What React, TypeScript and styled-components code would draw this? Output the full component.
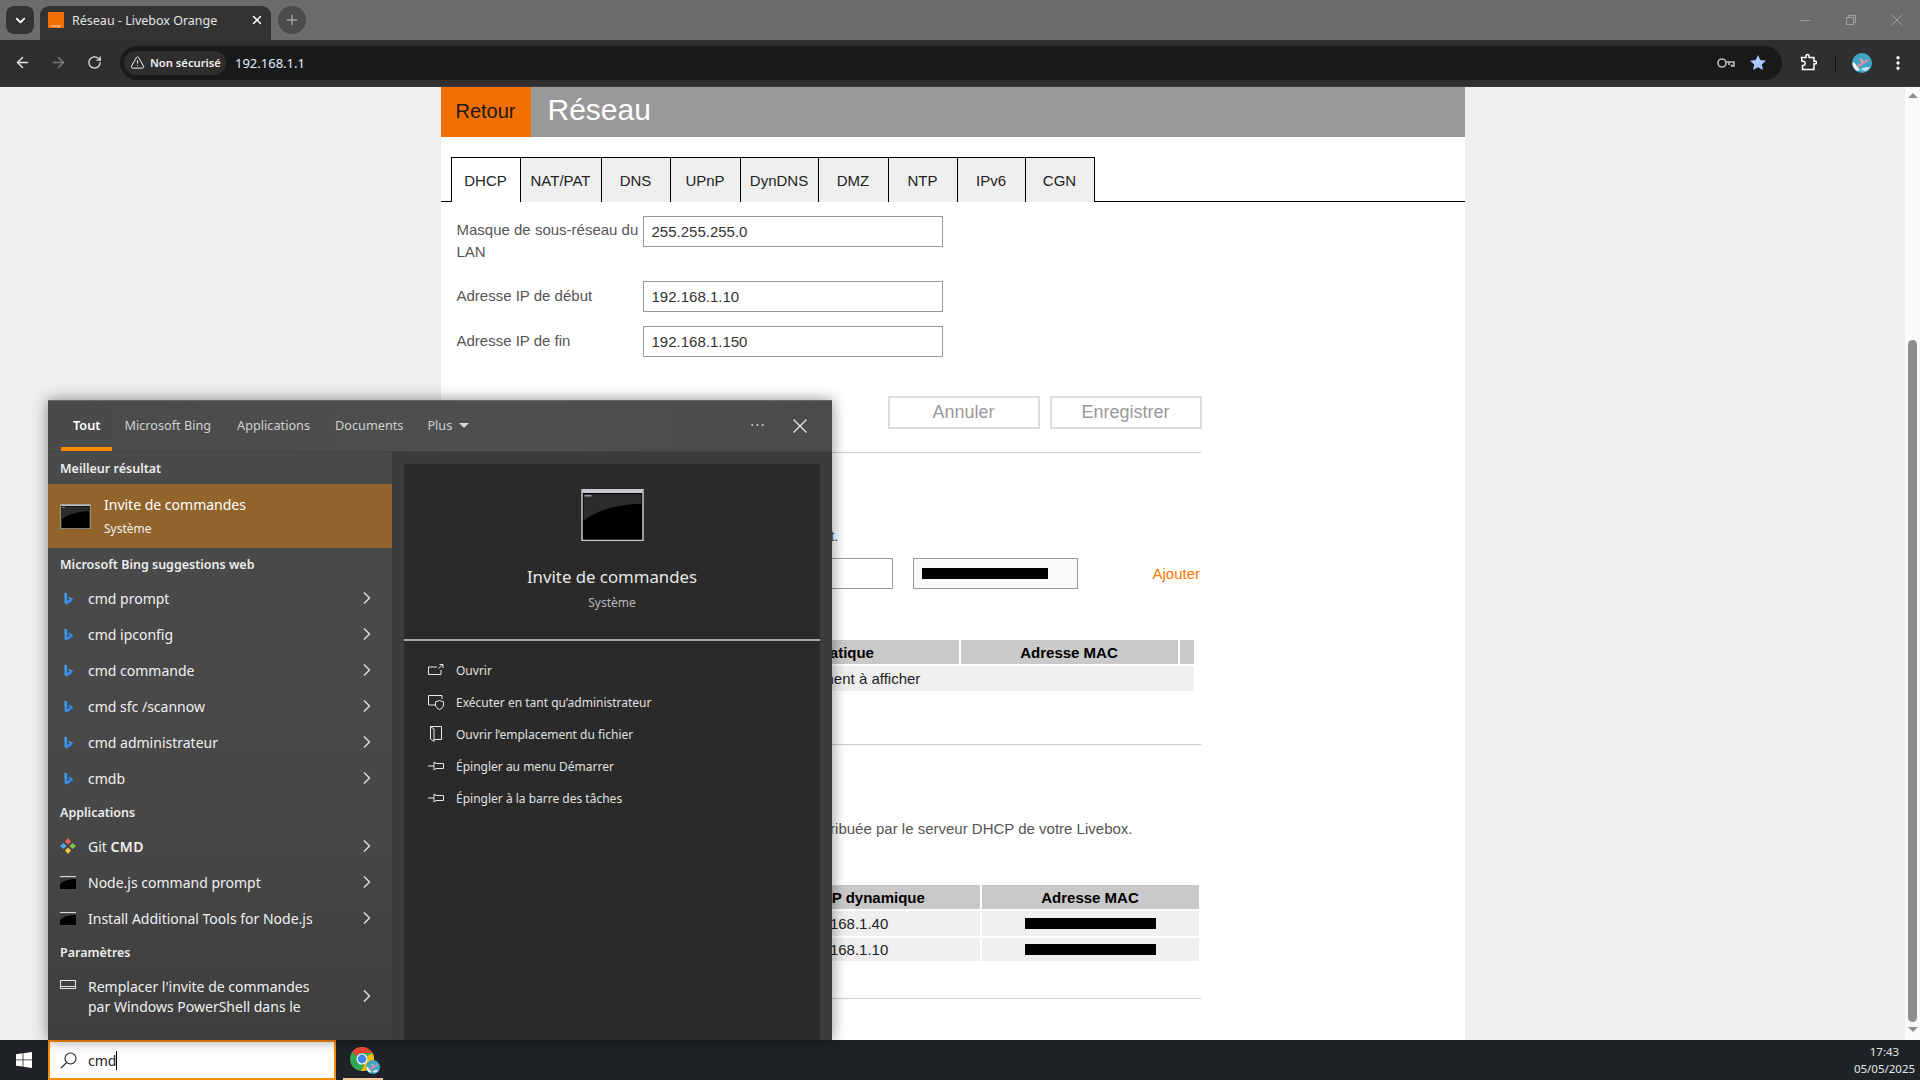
import styled, { createGlobalStyle } from 'styled-components'
import { ArrowLeft, ArrowRight, ChevronDown, ChevronRight, EllipsisVertical, Plus, RotateCw, TriangleAlert, X } from 'lucide-react'

const GlobalStyle = createGlobalStyle`
  html, body {
    margin: 0;
    padding: 0;
    width: 1920px;
    height: 1080px;
    overflow: hidden;
    font-family: "Liberation Sans", Arial, sans-serif;
  }
  * {
    box-sizing: border-box;
  }
`

const uiFont = `"Noto Sans", "Open Sans", sans-serif`

const Screen = styled.div`
  width: 1920px;
  height: 1080px;
  display: flex;
  flex-direction: column;
  overflow: hidden;
`

/* ---------- browser chrome ---------- */

const TabStrip = styled.div`
  height: 40px;
  flex: none;
  background: #6c6c6c;
  display: flex;
  align-items: flex-start;
  padding: 6px 0 0 6px;
  font-family: ${uiFont};
`

const TabListButton = styled.div`
  width: 28px;
  height: 28px;
  border-radius: 8px;
  background: #333333;
  color: #fff;
  display: flex;
  align-items: center;
  justify-content: center;
  margin-right: 6px;
`

const Tab = styled.div`
  width: 231px;
  height: 34px;
  background: #333333;
  border-radius: 9px 9px 0 0;
  display: flex;
  align-items: center;
  padding: 0 7px 6px 8px;
  color: #e4e4e4;
  font-size: 12.5px;
`

const Favicon = styled.div`
  width: 16px;
  height: 16px;
  flex: none;
  background: #f16e00;
  color: #fff;
  font-size: 3px;
  line-height: 4px;
  display: flex;
  align-items: flex-end;
  justify-content: center;
  margin-right: 8px;
`

const TabTitle = styled.span`
  flex: 1;
  white-space: nowrap;
`

const NewTab = styled.div`
  width: 28px;
  height: 28px;
  margin-left: 7px;
  border-radius: 50%;
  background: #4b4b4b;
  color: #a8a8a8;
  display: flex;
  align-items: center;
  justify-content: center;
`

const WindowControls = styled.div`
  margin-left: auto;
  display: flex;
  gap: 36px;
  padding: 9px 18px 0 0;
  color: #a0a0a0;
`

const Toolbar = styled.div`
  height: 47px;
  flex: none;
  background: #2f2f2f;
  border-bottom: 1px solid #3c3c3c;
  display: flex;
  align-items: center;
  padding: 0 0 1px 13px;
  font-family: ${uiFont};
`

const NavButton = styled.div<{ $dim?: boolean }>`
  width: 18px;
  height: 18px;
  margin-right: 18px;
  color: ${(p) => (p.$dim ? '#7c7c7c' : '#e6e6e6')};
  display: flex;
  align-items: center;
  justify-content: center;
`

const AddressBar = styled.div`
  width: 1662px;
  height: 34px;
  margin-left: -1px;
  border-radius: 17px;
  background: #1a1a1a;
  display: flex;
  align-items: center;
  padding: 0 16px 0 4px;
`

const SecurityChip = styled.div`
  width: 102px;
  height: 24px;
  border-radius: 12px;
  background: #2e2e2e;
  color: #f0f0f0;
  font-size: 11.2px;
  font-weight: 600;
  display: flex;
  align-items: center;
  gap: 5px;
  padding-left: 6px;
  white-space: nowrap;
`

const Url = styled.span`
  margin-left: 9px;
  font-size: 13px;
  color: #e6efff;
`

const AddressIcons = styled.div`
  margin-left: auto;
  display: flex;
  align-items: center;
  gap: 15px;
`

const ToolbarIcons = styled.div`
  display: flex;
  align-items: center;
  margin-left: 18px;
  color: #fff;
`

const ToolbarSeparator = styled.div`
  width: 1px;
  height: 16px;
  background: #111;
  margin: 0 16px 0 18px;
`

/* ---------- page under the search panel ---------- */

const Viewport = styled.div`
  position: relative;
  flex: 1;
  min-height: 0;
  display: flex;
`

const PageArea = styled.div`
  flex: 1;
  background: #efefef;
  overflow: hidden;
  display: flex;
  justify-content: center;
`

const Content = styled.main`
  width: 1024px;
  background: #fff;
`

const Header = styled.div`
  height: 50px;
  background: #999999;
  display: flex;
  align-items: center;
`

const BackLink = styled.div`
  width: 90px;
  height: 100%;
  padding-bottom: 2px;
  background: #f16e00;
  color: #1a1a1a;
  font-size: 20px;
  display: flex;
  align-items: center;
  justify-content: center;
`

const PageTitle = styled.h1`
  margin: 0 0 5px 17px;
  font-size: 30px;
  font-weight: 400;
  color: #fff;
`

const TabBar = styled.div`
  display: flex;
  margin-top: 20px;
  padding-left: 10px;
  border-bottom: 1px solid #000;
  height: 45px;
`

const PageTab = styled.div<{ $active?: boolean; $width: number }>`
  width: ${(p) => p.$width}px;
  height: 45px;
  background: ${(p) => (p.$active ? '#fff' : '#efefef')};
  border: 1px solid #000;
  border-left-width: ${(p) => (p.$active ? 1 : 0)}px;
  border-bottom: 0;
  font-size: 15px;
  color: #222;
  display: flex;
  align-items: center;
  justify-content: center;
`

const Body = styled.div`
  width: 760px;
  padding: 14px 0 0 16px;
`

const FormRow = styled.div`
  display: flex;
  align-items: flex-start;
  margin-bottom: 14px;
`

const FormLabel = styled.label<{ $top: number }>`
  width: 186px;
  padding: ${(p) => p.$top}px 0 4px;
  font-size: 15px;
  line-height: 22px;
  color: #555;
`

const TextInput = styled.div`
  width: 300px;
  height: 31px;
  border: 1px solid #999;
  padding: 0 8px;
  font-size: 15px;
  color: #333;
  display: flex;
  align-items: center;
`

const Actions = styled.div`
  display: flex;
  justify-content: flex-end;
  gap: 10px;
  margin: 39px -1px 0 0;
`

const ActionButton = styled.div`
  width: 152px;
  height: 33px;
  border: 2px solid #dddddd;
  color: #999;
  font-size: 18px;
  display: flex;
  align-items: center;
  justify-content: center;
`

const Rule = styled.hr<{ $top: number }>`
  margin: ${(p) => p.$top}px 0 0;
  border: 0;
  border-top: 1px solid #ccc;
  height: 1px;
`

const Notice = styled.p<{ $top: number; $right: number }>`
  margin: ${(p) => p.$top}px 0 0;
  padding-right: ${(p) => p.$right}px;
  text-align: right;
  font-size: 15px;
  line-height: 22px;
  color: #555;
  white-space: nowrap;
`

const AddRow = styled.div`
  display: flex;
  align-items: center;
  justify-content: flex-end;
  margin-top: 11px;
`

const MacField = styled.div`
  width: 165px;
  height: 31px;
  margin-left: 20px;
  border: 1px solid #999;
  background: #f9f9f9;
  padding-left: 8px;
  display: flex;
  align-items: center;
`

const AddLink = styled.span`
  margin-left: 75px;
  width: 48px;
  font-size: 15px;
  color: #ff7900;
`

const Table = styled.div<{ $top: number }>`
  margin: ${(p) => p.$top}px 0 0 25px;
  display: flex;
  flex-direction: column;
  gap: 2px;
`

const TableRow = styled.div<{ $cols: string }>`
  display: grid;
  grid-template-columns: ${(p) => p.$cols};
  gap: 2px;
`

const HeadCell = styled.div`
  height: 24px;
  background: #c9c9c9;
  font-size: 15px;
  font-weight: 700;
  color: #000;
  display: flex;
  align-items: center;
  justify-content: center;
`

const Cell = styled.div<{ $height?: number }>`
  height: ${(p) => p.$height ?? 25}px;
  background: #efefef;
  font-size: 15px;
  color: #222;
  display: flex;
  align-items: center;
  justify-content: center;
`

const Masked = styled.div<{ $width: number }>`
  width: ${(p) => p.$width}px;
  height: 11px;
  background: #000;
`

/* ---------- scrollbar ---------- */

const ScrollTrack = styled.div`
  width: 15px;
  flex: none;
  background: #fafafa;
  display: flex;
  flex-direction: column;
  align-items: center;
`

const ScrollArrow = styled.div<{ $down?: boolean }>`
  width: 0;
  height: 0;
  border-left: 5px solid transparent;
  border-right: 5px solid transparent;
  ${(p) => (p.$down ? 'border-top: 5px solid #8f8f8f;' : 'border-bottom: 5px solid #8f8f8f;')}
  margin-top: ${(p) => (p.$down ? 5 : 6)}px;
`

const ScrollThumb = styled.div`
  width: 9px;
  height: 682px;
  margin-top: 242px;
  background: #8f8f8f;
  border-radius: 5px;
`

/* ---------- windows search panel ---------- */

const SearchPanel = styled.section`
  position: absolute;
  left: 48px;
  top: 313px;
  bottom: 0;
  width: 784px;
  background: #3c3c3c;
  box-shadow: 0 0 14px rgba(0, 0, 0, 0.45);
  border-top: 1px solid #6a6a6a;
  display: flex;
  flex-direction: column;
  font-family: ${uiFont};
  color: #fff;
`

const PanelTabs = styled.div`
  height: 51px;
  flex: none;
  background: linear-gradient(90deg, #4a4a4a, #4f4f4f 60%, #4b4b4b);
  border-bottom: 1px solid #434343;
  display: flex;
  align-items: center;
  font-size: 12.7px;
  color: #cfcfcf;
  padding-left: 13px;
`

const PanelTab = styled.div<{ $active?: boolean; $gap: number }>`
  height: 100%;
  display: flex;
  align-items: center;
  gap: 7px;
  padding: 2px 12px 0;
  margin-right: ${(p) => p.$gap}px;
  font-weight: ${(p) => (p.$active ? 600 : 400)};
  color: ${(p) => (p.$active ? '#fff' : '#cfcfcf')};
  border-bottom: 4px solid ${(p) => (p.$active ? '#ff8c00' : 'transparent')};
  white-space: nowrap;
`

const PanelCaret = styled.span`
  width: 0;
  height: 0;
  border-left: 5px solid transparent;
  border-right: 5px solid transparent;
  border-top: 5px solid #d8d8d8;
`

const PanelDots = styled.span`
  margin-left: auto;
  margin-right: 27px;
  font-size: 14px;
  letter-spacing: 1.5px;
  line-height: 1;
  padding-bottom: 3px;
`

const PanelClose = styled.div`
  margin-right: 25px;
  color: #e8e8e8;
  display: flex;
`

const PanelBody = styled.div`
  flex: 1;
  min-height: 0;
  display: flex;
`

const ResultList = styled.div`
  width: 344px;
  flex: none;
  background: linear-gradient(180deg, #4a4a4a, #484848 60%, #3e3e3e);
`

const GroupTitle = styled.div`
  height: 32px;
  padding-left: 12px;
  display: flex;
  align-items: center;
  font-size: 12.5px;
  font-weight: 600;
  color: #ececec;
`

const BestMatch = styled.div`
  height: 64px;
  background: #91642c;
  display: flex;
  align-items: center;
  padding-left: 12px;
`

const BestText = styled.div`
  margin-left: 13px;
  display: flex;
  flex-direction: column;
  gap: 6px;
`

const BestTitle = styled.span`
  font-size: 14px;
  line-height: 19px;
  color: #fff;
`

const BestSub = styled.span`
  font-size: 12px;
  line-height: 17px;
  color: #f2f2f2;
`

const ResultRow = styled.div<{ $tall?: boolean }>`
  height: ${(p) => (p.$tall ? 56 : 36)}px;
  display: flex;
  align-items: center;
  font-size: 14px;
  line-height: 20px;
  color: #f0f0f0;
`

const ResultIcon = styled.div<{ $top?: boolean; $inset?: number }>`
  width: 40px;
  flex: none;
  display: flex;
  padding-left: ${(p) => p.$inset ?? 12}px;
  align-self: ${(p) => (p.$top ? 'flex-start' : 'center')};
  padding-top: ${(p) => (p.$top ? 12 : 0)}px;
`

const ResultLabel = styled.div`
  flex: 1;
  padding-top: 1px;
  white-space: nowrap;
`

const ResultStrong = styled.span`
  font-weight: 600;
  letter-spacing: 0.4px;
`

const ResultMore = styled.div`
  width: 20px;
  margin-right: 15px;
  color: #d8d8d8;
  display: flex;
  justify-content: center;
`

const Preview = styled.div`
  flex: 1;
  margin: 12px 12px 0;
  background: #2a2a2a;
  display: flex;
  flex-direction: column;
`

const PreviewHead = styled.div`
  height: 177px;
  flex: none;
  padding-top: 25px;
  border-bottom: 2px solid #a8a8a8;
  display: flex;
  flex-direction: column;
  align-items: center;
`

const PreviewTitle = styled.div`
  margin-top: 24px;
  font-size: 16.8px;
  line-height: 24px;
  color: #e6e6e6;
`

const PreviewSub = styled.div`
  margin-top: 5px;
  font-size: 12px;
  line-height: 17px;
  color: #b8b8b8;
`

const PreviewActions = styled.div`
  padding-top: 13px;
`

const PreviewAction = styled.div`
  height: 32px;
  padding-left: 24px;
  display: flex;
  align-items: center;
  gap: 12px;
  font-size: 12px;
  color: #e0e0e0;
  white-space: nowrap;
`

/* ---------- taskbar ---------- */

const Taskbar = styled.footer`
  height: 40px;
  flex: none;
  background: #1f2226;
  display: flex;
  font-family: ${uiFont};
`

const StartButton = styled.div`
  width: 48px;
  display: flex;
  align-items: center;
  justify-content: center;
`

const SearchBox = styled.div`
  width: 288px;
  border: 2px solid #ff8c00;
  background: #fff;
  display: flex;
  align-items: center;
  padding-left: 10px;
  gap: 11px;
  font-size: 14px;
  color: #222;
`

const Caret = styled.span`
  display: inline-block;
  width: 1px;
  height: 19px;
  background: #000;
  vertical-align: -4px;
`

const TaskButton = styled.div`
  width: 40px;
  margin-left: 7px;
  border-bottom: 2px solid #f6c99c;
  display: flex;
  align-items: center;
  justify-content: center;
`

const Clock = styled.div`
  margin-left: auto;
  width: 70px;
  padding-right: 1px;
  display: flex;
  flex-direction: column;
  align-items: center;
  justify-content: center;
  font-size: 11.5px;
  line-height: 17px;
  color: #e6e6e6;
`

const ChromeMark = styled.div`
  position: relative;
  width: 24px;
  height: 24px;
  margin-right: 2px;
`

const ChromeBadge = styled.div`
  position: absolute;
  right: -6px;
  bottom: -3px;
  display: flex;
`

const KebabSlot = styled.div`
  margin-left: 17px;
  display: flex;
`

/* ---------- drawings ---------- */

function ConsoleIcon({ width, height }: { width: number; height: number }) {
  return (
    <svg width={width} height={height} viewBox="0 0 62 52">
      <rect x="0.5" y="0.5" width="61" height="51" fill="#000" stroke="#c4c8cc" strokeWidth="1.5" />
      <rect x="1" y="1" width="60" height="3" fill="#c8ccd2" />
      <path d="M2 5H60V15C40 15 16 20 2 32Z" fill="#2c2c2c" />
      <rect x="3" y="6" width="7" height="1.5" fill="#9a9a9a" />
    </svg>
  )
}

function SmallConsole() {
  return (
    <svg width="16" height="13" viewBox="0 0 16 13">
      <rect width="16" height="13" fill="#000" />
      <rect width="16" height="1.5" fill="#d8d8d8" />
      <path d="M0 1.5H16V3C9 3 3 5 0 8Z" fill="#3a3a3a" />
    </svg>
  )
}

function BingIcon() {
  return (
    <svg width="9" height="13" viewBox="0 0 9 13">
      <defs>
        <linearGradient id="bingFill" x1="0" y1="0" x2="1" y2="1">
          <stop offset="0" stopColor="#3fa9f5" />
          <stop offset="1" stopColor="#2f7de1" />
        </linearGradient>
      </defs>
      <path d="M0.5 0.5L3 1.4V9L6.2 7.2L4.6 6.4L3.9 4.6L8.6 6.2V8.6L3 12.5L0.5 11Z" fill="url(#bingFill)" />
    </svg>
  )
}

function GitIcon() {
  return (
    <svg width="16" height="16" viewBox="0 0 16 16">
      <path d="M8 0L11 3.5L8 6.5L5 3.5Z" fill="#f0605a" />
      <path d="M16 8L12.5 11L9.5 8L12.5 5Z" fill="#8cc63f" />
      <path d="M8 16L5 12.5L8 9.5L11 12.5Z" fill="#f7c93e" />
      <path d="M0 8L3.5 5L6.5 8L3.5 11Z" fill="#4fa3f0" />
    </svg>
  )
}

function SettingsIcon() {
  return (
    <svg width="16" height="9" viewBox="0 0 16 9" fill="none" stroke="#e6e6e6">
      <rect x="0.5" y="0.5" width="15" height="8" />
      <path d="M0.5 6.5H15.5" />
    </svg>
  )
}

function OpenIcon() {
  return (
    <svg width="16" height="12" viewBox="0 0 16 12" fill="none" stroke="#e8e8e8">
      <path d="M9 3H0.5V10.5H13V6" />
      <path d="M10.5 4.5L15 0.5M11.5 0.5H15V4" />
    </svg>
  )
}

function AdminIcon() {
  return (
    <svg width="16" height="15" viewBox="0 0 16 15" fill="none" stroke="#e8e8e8">
      <path d="M8 10H0.5V0.5H14V4" />
      <path d="M11.5 5.5L15.5 6.8V10C15.5 12 13.5 13.8 11.5 14.5C9.5 13.8 7.5 12 7.5 10V6.8Z" />
    </svg>
  )
}

function FolderIcon() {
  return (
    <svg width="16" height="16" viewBox="0 0 16 16" fill="none" stroke="#e8e8e8">
      <path d="M2.5 0.5H13.5V13.5H6" />
      <path d="M2.5 0.5L6 3V15.5L2.5 13Z" />
    </svg>
  )
}

function PinIcon() {
  return (
    <svg width="16" height="10" viewBox="0 0 16 10" fill="none" stroke="#e8e8e8">
      <path d="M0 5H6M6 1V9L8 7.5H15.5V2.5H8Z" />
    </svg>
  )
}

function PanelCloseIcon() {
  return (
    <svg width="14" height="14" viewBox="0 0 14 14" stroke="#e8e8e8" strokeWidth="1.3">
      <path d="M0.5 0.5L13.5 13.5M13.5 0.5L0.5 13.5" />
    </svg>
  )
}

function WindowsLogo() {
  return (
    <svg width="16" height="16" viewBox="0 0 16 16" fill="#fff">
      <path d="M0 2.2L6.6 1.3V7.5H0Z" />
      <path d="M7.4 1.2L16 0V7.5H7.4Z" />
      <path d="M0 8.3H6.6V14.6L0 13.7Z" />
      <path d="M7.4 8.3H16V16L7.4 14.8Z" />
    </svg>
  )
}

function SearchGlyph() {
  return (
    <svg width="17" height="17" viewBox="0 0 17 17" fill="none" stroke="#222" strokeWidth="1.1">
      <circle cx="10.5" cy="6.5" r="5.5" />
      <path d="M6.5 10.5L0.8 16.3" />
    </svg>
  )
}

function Avatar({ size }: { size: number }) {
  return (
    <svg width={size} height={size} viewBox="0 0 20 20">
      <circle cx="10" cy="10" r="10" fill="#3ea6c4" />
      <path d="M0.5 10C3 8 4 13 8 17L5 18C2 16 0.5 13 0.5 10Z" fill="#f2f6f8" />
      <path d="M4 13L16 6L17 7.5L6 14.5Z" fill="#e98a9c" />
      <path d="M9 5L12 9L10 10L7.5 6Z" fill="#f0a0b0" />
      <path d="M9 16C12 14 15 14 18 14C16 18 12 19.5 9 16Z" fill="#bfe3ee" />
    </svg>
  )
}

function ChromeTaskIcon() {
  return (
    <ChromeMark>
      <svg width="24" height="24" viewBox="0 0 24 24">
        <circle cx="12" cy="12" r="12" fill="#34a853" />
        <path d="M12 0A12 12 0 0 1 22.4 6H12A6 6 0 0 0 6.8 9L2.2 5A12 12 0 0 1 12 0Z" fill="#ea4335" />
        <path d="M22.4 6A12 12 0 0 1 11 24L16 15A6 6 0 0 0 17.2 9Z" fill="#fbbc04" />
        <circle cx="12" cy="12" r="5.5" fill="#fff" />
        <circle cx="12" cy="12" r="4.4" fill="#4285f4" />
      </svg>
      <ChromeBadge>
        <Avatar size={14} />
      </ChromeBadge>
    </ChromeMark>
  )
}

function KeyIcon() {
  return (
    <svg width="18" height="10" viewBox="0 0 18 10" fill="none" stroke="#bdbdbd" strokeWidth="1.6">
      <circle cx="5" cy="5" r="4" />
      <path d="M9 4H17V8H14.5V6.5M12 4V7" />
    </svg>
  )
}

function StarIcon() {
  return (
    <svg width="16" height="15" viewBox="0 0 16 15" fill="#a8c7fa">
      <path d="M8 0L10.3 5L16 5.7L11.8 9.5L13 15L8 12.2L3 15L4.2 9.5L0 5.7L5.7 5Z" />
    </svg>
  )
}

function ExtensionIcon() {
  return (
    <svg width="17" height="17" viewBox="0 0 17 17" fill="none" stroke="#fff" strokeWidth="1.5">
      <path d="M1.5 3.5H6V2A1.5 1.5 0 0 1 9 2V3.5H14V7.2H15.2A1.3 1.3 0 0 1 15.2 9.8H14V15.5H2.5V11.5H3.5A2.2 2.2 0 0 0 3.5 7.2H2Z" />
    </svg>
  )
}

function RestoreIcon() {
  return (
    <svg width="10" height="10" viewBox="0 0 10 10" fill="none" stroke="#a0a0a0">
      <rect x="0.5" y="2.5" width="7" height="7" />
      <path d="M2.5 2.5V0.5H9.5V7.5H7.5" />
    </svg>
  )
}

function MinimizeIcon() {
  return (
    <svg width="10" height="10" viewBox="0 0 10 10" stroke="#a0a0a0">
      <path d="M0 5.5H10" />
    </svg>
  )
}

function CloseIcon() {
  return (
    <svg width="10" height="10" viewBox="0 0 10 10" stroke="#a0a0a0">
      <path d="M0 0L10 10M10 0L0 10" />
    </svg>
  )
}

function More() {
  return (
    <ResultMore>
      <ChevronRight size={20} strokeWidth={2} />
    </ResultMore>
  )
}

const pageTabs = [
  { label: 'DHCP', width: 70, active: true },
  { label: 'NAT/PAT', width: 81 },
  { label: 'DNS', width: 69 },
  { label: 'UPnP', width: 70 },
  { label: 'DynDNS', width: 78 },
  { label: 'DMZ', width: 70 },
  { label: 'NTP', width: 69 },
  { label: 'IPv6', width: 68 },
  { label: 'CGN', width: 69 },
]

const webSuggestions = ['cmd prompt', 'cmd ipconfig', 'cmd commande', 'cmd sfc /scannow', 'cmd administrateur', 'cmdb']

const previewActions = [
  { label: 'Ouvrir', icon: <OpenIcon /> },
  { label: 'Exécuter en tant qu’administrateur', icon: <AdminIcon /> },
  { label: 'Ouvrir l’emplacement du fichier', icon: <FolderIcon /> },
  { label: 'Épingler au menu Démarrer', icon: <PinIcon /> },
  { label: 'Épingler à la barre des tâches', icon: <PinIcon /> },
]

const staticCols = '167px 308px 217px 14px'
const dynamicCols = '226px 270px 217px'

export default function App() {
  return (
    <Screen>
      <GlobalStyle />
      <TabStrip>
        <TabListButton>
          <ChevronDown size={15} strokeWidth={3} />
        </TabListButton>
        <Tab>
          <Favicon>orange</Favicon>
          <TabTitle>Réseau - Livebox Orange</TabTitle>
          <X size={14} strokeWidth={2.5} color="#fff" />
        </Tab>
        <NewTab>
          <Plus size={16} strokeWidth={2} />
        </NewTab>
        <WindowControls>
          <MinimizeIcon />
          <RestoreIcon />
          <CloseIcon />
        </WindowControls>
      </TabStrip>

      <Toolbar>
        <NavButton>
          <ArrowLeft size={17} strokeWidth={2} />
        </NavButton>
        <NavButton $dim>
          <ArrowRight size={17} strokeWidth={2} />
        </NavButton>
        <NavButton>
          <RotateCw size={15} strokeWidth={2} />
        </NavButton>
        <AddressBar>
          <SecurityChip>
            <TriangleAlert size={15} strokeWidth={1.6} />
            Non sécurisé
          </SecurityChip>
          <Url>192.168.1.1</Url>
          <AddressIcons>
            <KeyIcon />
            <StarIcon />
          </AddressIcons>
        </AddressBar>
        <ToolbarIcons>
          <ExtensionIcon />
          <ToolbarSeparator />
          <Avatar size={20} />
          <KebabSlot>
            <EllipsisVertical size={18} strokeWidth={2.4} />
          </KebabSlot>
        </ToolbarIcons>
      </Toolbar>

      <Viewport>
        <PageArea>
          <Content>
            <Header>
              <BackLink>Retour</BackLink>
              <PageTitle>Réseau</PageTitle>
            </Header>
            <TabBar>
              {pageTabs.map((t) => (
                <PageTab key={t.label} $active={t.active} $width={t.width}>
                  {t.label}
                </PageTab>
              ))}
            </TabBar>
            <Body>
              <FormRow>
                <FormLabel $top={3}>Masque de sous-réseau du LAN</FormLabel>
                <TextInput>255.255.255.0</TextInput>
              </FormRow>
              <FormRow>
                <FormLabel $top={4}>Adresse IP de début</FormLabel>
                <TextInput>192.168.1.10</TextInput>
              </FormRow>
              <FormRow>
                <FormLabel $top={4}>Adresse IP de fin</FormLabel>
                <TextInput>192.168.1.150</TextInput>
              </FormRow>
              <Actions>
                <ActionButton>Annuler</ActionButton>
                <ActionButton>Enregistrer</ActionButton>
              </Actions>
              <Rule $top={23} />

              <Notice $top={72} $right={362}>
                Attribuer une adresse IP statique à un équipement.
              </Notice>
              <AddRow>
                <TextInput />
                <MacField>
                  <Masked $width={126} />
                </MacField>
                <AddLink>Ajouter</AddLink>
              </AddRow>
              <Table $top={51}>
                <TableRow $cols={staticCols}>
                  <HeadCell />
                  <HeadCell>Adresse IP statique</HeadCell>
                  <HeadCell>Adresse MAC</HeadCell>
                  <HeadCell />
                </TableRow>
                <TableRow $cols="712px">
                  <Cell>Aucun élément à afficher</Cell>
                </TableRow>
              </Table>
              <Rule $top={53} />

              <Notice $top={73} $right={68}>
                Adresse IP attribuée par le serveur DHCP de votre Livebox.
              </Notice>
              <Table $top={45}>
                <TableRow $cols={dynamicCols}>
                  <HeadCell />
                  <HeadCell>Adresse IP dynamique</HeadCell>
                  <HeadCell>Adresse MAC</HeadCell>
                </TableRow>
                <TableRow $cols={dynamicCols}>
                  <Cell />
                  <Cell>192.168.1.40</Cell>
                  <Cell>
                    <Masked $width={131} />
                  </Cell>
                </TableRow>
                <TableRow $cols={dynamicCols}>
                  <Cell $height={23} />
                  <Cell $height={23}>192.168.1.10</Cell>
                  <Cell $height={23}>
                    <Masked $width={131} />
                  </Cell>
                </TableRow>
              </Table>
              <Rule $top={37} />
            </Body>
          </Content>
        </PageArea>

        <ScrollTrack>
          <ScrollArrow />
          <ScrollThumb />
          <ScrollArrow $down />
        </ScrollTrack>

        <SearchPanel>
          <PanelTabs>
            <PanelTab $active $gap={0}>Tout</PanelTab>
            <PanelTab $gap={2}>Microsoft Bing</PanelTab>
            <PanelTab $gap={1}>Applications</PanelTab>
            <PanelTab $gap={0}>Documents</PanelTab>
            <PanelTab $gap={0}>
              Plus
              <PanelCaret />
            </PanelTab>
            <PanelDots>···</PanelDots>
            <PanelClose>
              <PanelCloseIcon />
            </PanelClose>
          </PanelTabs>
          <PanelBody>
            <ResultList>
              <GroupTitle>Meilleur résultat</GroupTitle>
              <BestMatch>
                <ConsoleIcon width={31} height={25} />
                <BestText>
                  <BestTitle>Invite de commandes</BestTitle>
                  <BestSub>Système</BestSub>
                </BestText>
              </BestMatch>
              <GroupTitle>Microsoft Bing suggestions web</GroupTitle>
              {webSuggestions.map((s) => (
                <ResultRow key={s}>
                  <ResultIcon $inset={16}>
                    <BingIcon />
                  </ResultIcon>
                  <ResultLabel>{s}</ResultLabel>
                  <More />
                </ResultRow>
              ))}
              <GroupTitle>Applications</GroupTitle>
              <ResultRow>
                <ResultIcon>
                  <GitIcon />
                </ResultIcon>
                <ResultLabel>
                  Git <ResultStrong>CMD</ResultStrong>
                </ResultLabel>
                <More />
              </ResultRow>
              <ResultRow>
                <ResultIcon>
                  <SmallConsole />
                </ResultIcon>
                <ResultLabel>Node.js command prompt</ResultLabel>
                <More />
              </ResultRow>
              <ResultRow>
                <ResultIcon>
                  <SmallConsole />
                </ResultIcon>
                <ResultLabel>Install Additional Tools for Node.js</ResultLabel>
                <More />
              </ResultRow>
              <GroupTitle>Paramètres</GroupTitle>
              <ResultRow $tall>
                <ResultIcon $top>
                  <SettingsIcon />
                </ResultIcon>
                <ResultLabel>
                  Remplacer l'invite de commandes
                  <br />
                  par Windows PowerShell dans le
                </ResultLabel>
                <More />
              </ResultRow>
            </ResultList>
            <Preview>
              <PreviewHead>
                <ConsoleIcon width={63} height={52} />
                <PreviewTitle>Invite de commandes</PreviewTitle>
                <PreviewSub>Système</PreviewSub>
              </PreviewHead>
              <PreviewActions>
                {previewActions.map((a) => (
                  <PreviewAction key={a.label}>
                    {a.icon}
                    {a.label}
                  </PreviewAction>
                ))}
              </PreviewActions>
            </Preview>
          </PanelBody>
        </SearchPanel>
      </Viewport>

      <Taskbar>
        <StartButton>
          <WindowsLogo />
        </StartButton>
        <SearchBox>
          <SearchGlyph />
          <span>
            cmd
            <Caret />
          </span>
        </SearchBox>
        <TaskButton>
          <ChromeTaskIcon />
        </TaskButton>
        <Clock>
          <span>17:43</span>
          <span>05/05/2025</span>
        </Clock>
      </Taskbar>
    </Screen>
  )
}
